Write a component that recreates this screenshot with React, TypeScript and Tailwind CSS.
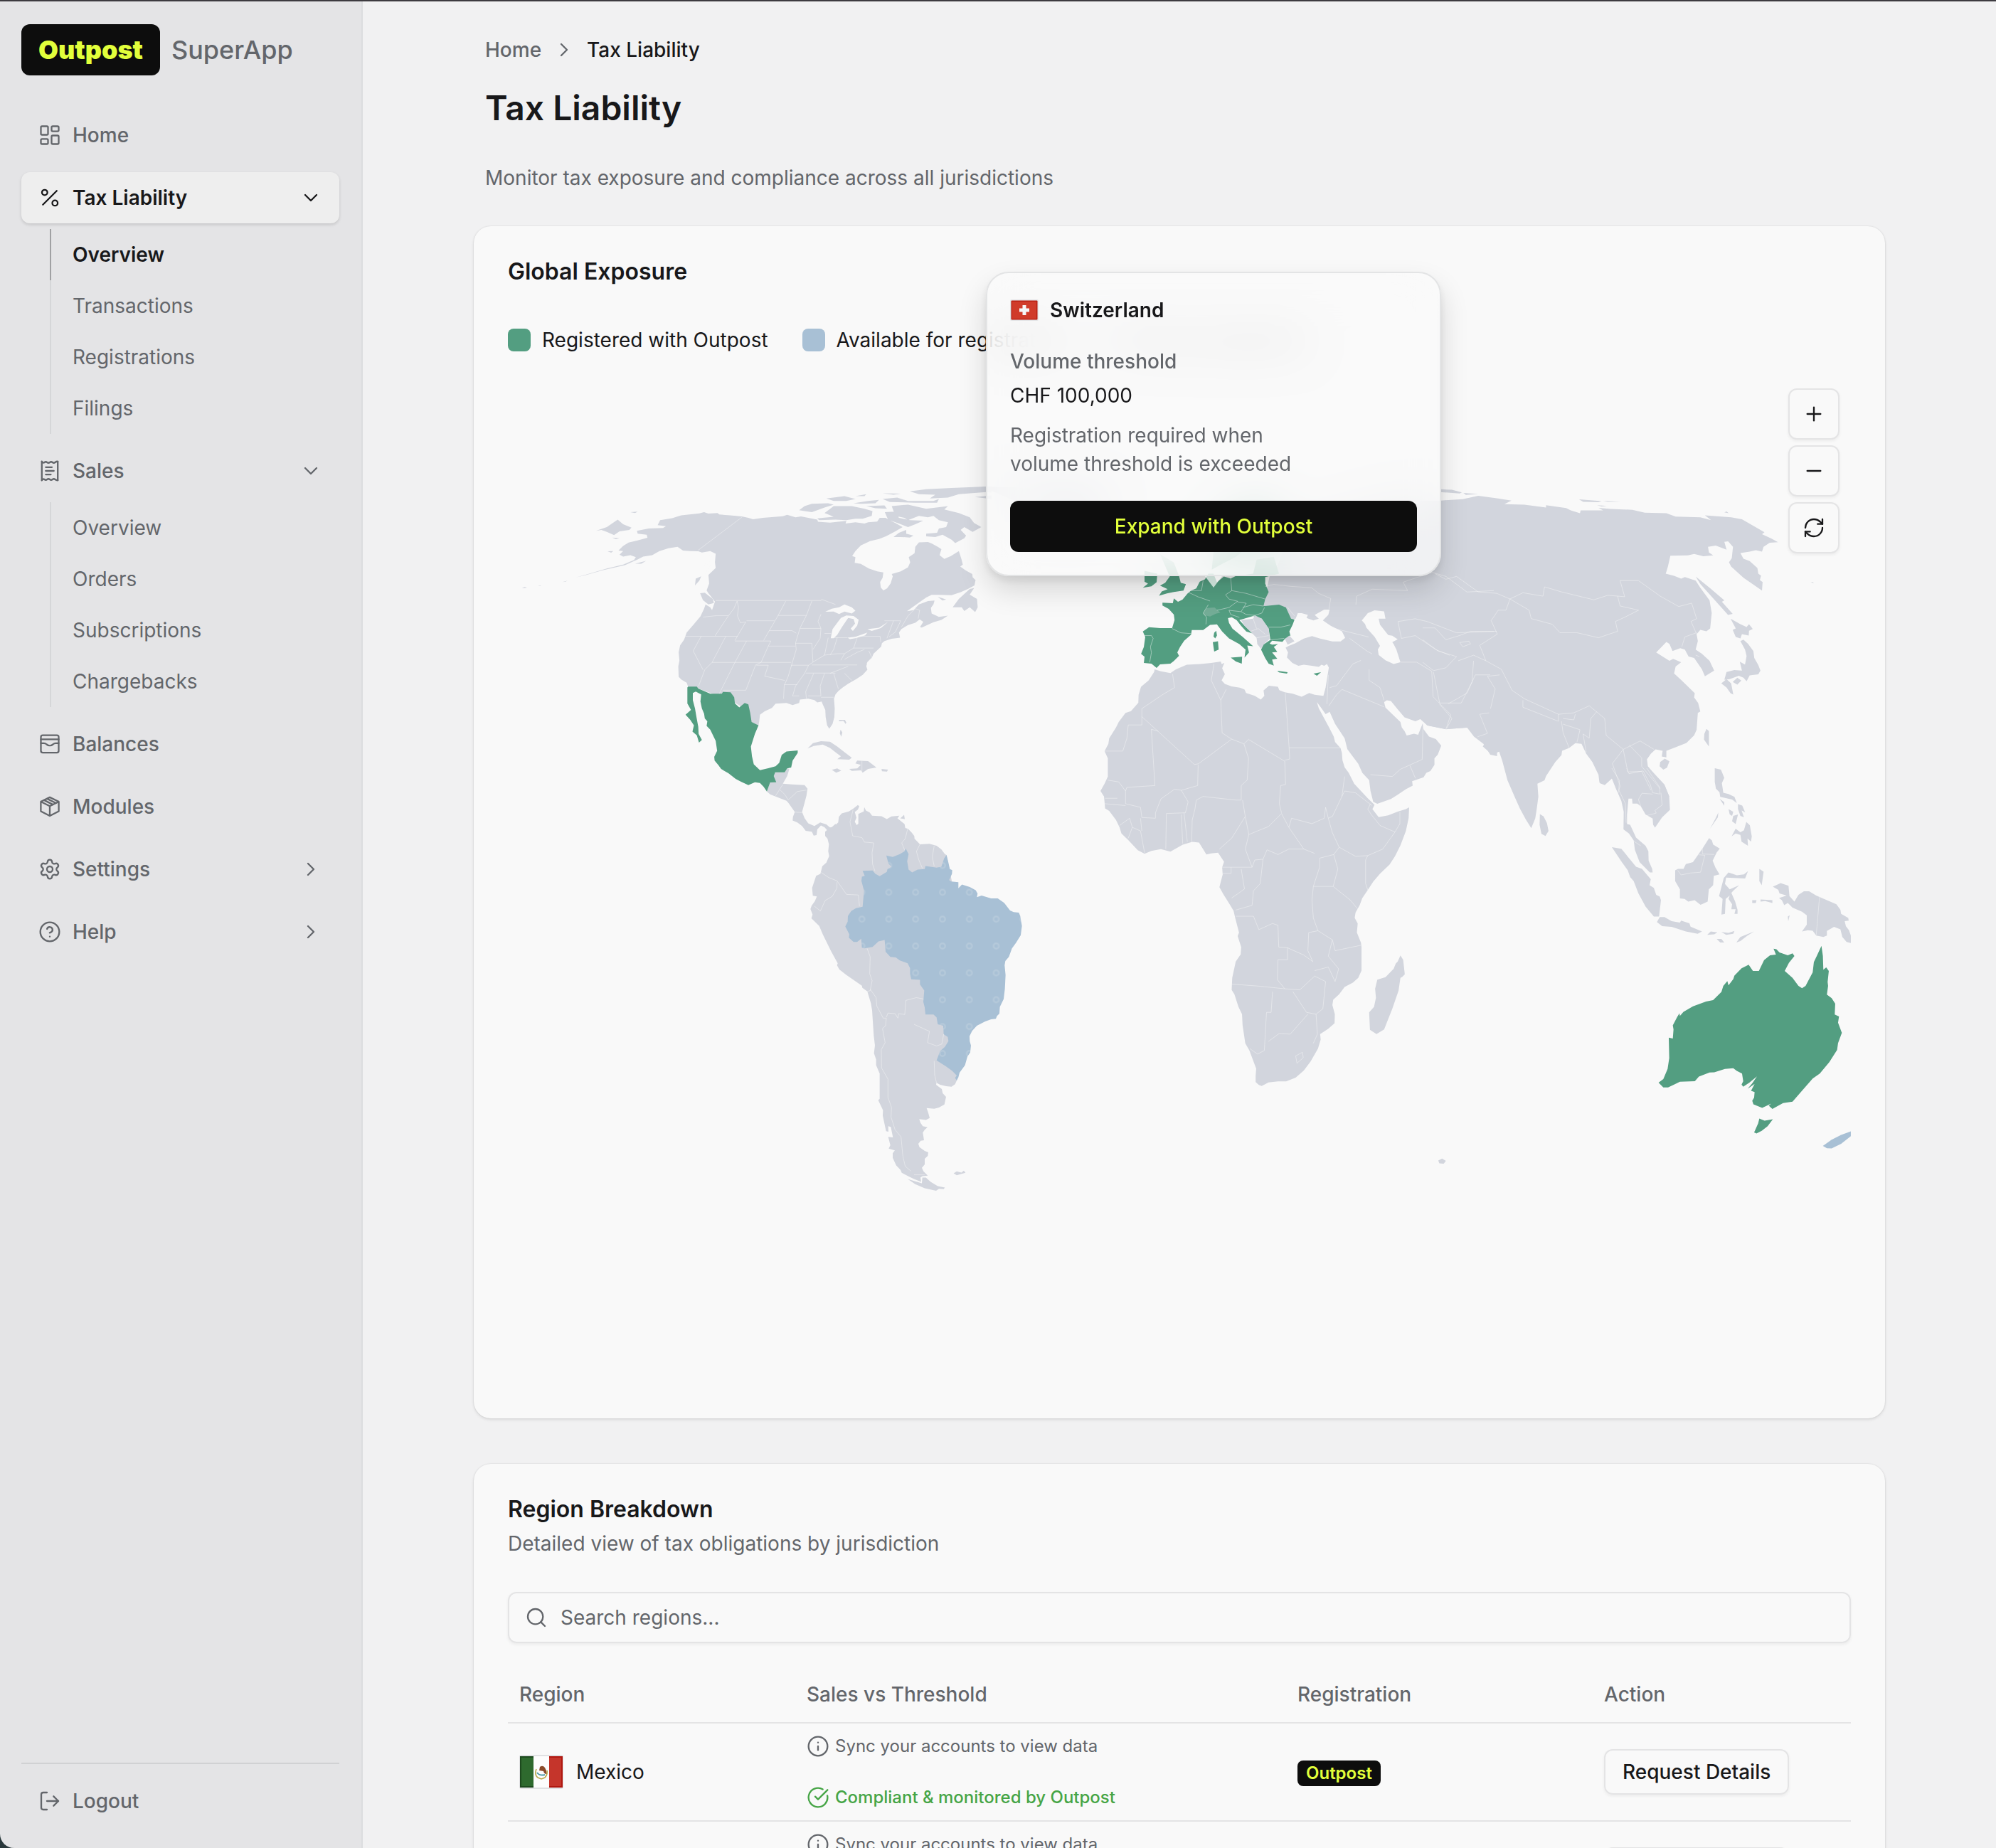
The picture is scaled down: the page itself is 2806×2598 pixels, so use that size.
import React from 'react';
import {
  ChevronDown,
  ChevronRight,
  CircleCheckBig,
  CircleQuestionMark,
  Info,
  LogOut,
  Minus,
  Plus,
  RefreshCw,
  Search,
  Settings,
} from 'lucide-react';

interface NavItem {
  label: string;
  icon: React.ReactNode;
  active?: boolean;
  chevron?: 'down' | 'right';
  children?: string[];
}

const LineIcon: React.FC<{ children: React.ReactNode }> = ({ children }) => (
  <svg
    viewBox="0 0 32 32"
    className="size-8 shrink-0"
    fill="none"
    stroke="currentColor"
    strokeWidth="2.3"
    strokeLinecap="round"
    strokeLinejoin="round"
  >
    {children}
  </svg>
);

const HomeIcon = () => (
  <LineIcon>
    <rect x="3.5" y="3.5" width="10" height="12" rx="1.6" />
    <rect x="3.5" y="21.3" width="10" height="7.2" rx="1.6" />
    <rect x="18.5" y="3.5" width="10" height="7.2" rx="1.6" />
    <rect x="18.5" y="16.5" width="10" height="12" rx="1.6" />
  </LineIcon>
);

const PercentIcon = () => (
  <LineIcon>
    <circle cx="8.8" cy="8.6" r="3.8" />
    <circle cx="23.3" cy="23.4" r="3.8" />
    <path d="M6.3 25.7 25.8 6.3" />
  </LineIcon>
);

const ReceiptIcon = () => (
  <LineIcon>
    <path d="M4.8 2.8v26.4M27.2 2.8v26.4" />
    <path d="M4.8 2.8q1.8 2.6 3.7 1.2 1.9-1.4 3.7 0 1.9 1.4 3.8 0 1.9-1.4 3.8 0 1.8 1.4 3.7 0 1.9-1.4 3.7-1.2M4.8 29.2q1.8-2.6 3.7-1.2 1.9 1.4 3.7 0 1.9-1.4 3.8 0 1.9 1.4 3.8 0 1.8-1.4 3.7 0 1.9 1.4 3.7 1.2" />
    <path d="M10.3 10.8h8.7M10.3 16h11.4M10.3 21.1h7.2" />
  </LineIcon>
);

const WalletIcon = () => (
  <LineIcon>
    <rect x="3.5" y="3.7" width="25" height="24.4" rx="2.6" />
    <path d="M3.5 9.4h25M3.5 14.8h4.3c1.4 0 2.6.6 3.8 1.7 2.6 2.2 6.2 2.2 8.8 0 1.2-1.1 2.4-1.7 3.8-1.7h4.3" />
  </LineIcon>
);

const BoxIcon = () => (
  <LineIcon>
    <path d="M16 2.9 28.6 9v13.6L16 29.1 3.4 22.6V9zM3.4 9 16 15.2 28.6 9M16 15.2v13.9" />
    <path d="m8 6.9 12.4 6.2M12.2 4.9l12.4 6.1" />
  </LineIcon>
);

const navItems: NavItem[] = [
  { label: 'Home', icon: <HomeIcon /> },
  {
    label: 'Tax Liability',
    icon: <PercentIcon />,
    active: true,
    chevron: 'down',
    children: ['Overview', 'Transactions', 'Registrations', 'Filings'],
  },
  {
    label: 'Sales',
    icon: <ReceiptIcon />,
    chevron: 'down',
    children: ['Overview', 'Orders', 'Subscriptions', 'Chargebacks'],
  },
  { label: 'Balances', icon: <WalletIcon /> },
  { label: 'Modules', icon: <BoxIcon /> },
  { label: 'Settings', icon: <Settings size={32} strokeWidth={1.75} />, chevron: 'right' },
  { label: 'Help', icon: <CircleQuestionMark size={32} strokeWidth={1.75} />, chevron: 'right' },
];

const Sidebar: React.FC = () => (
  <aside className="w-[510px] shrink-0 flex flex-col bg-[#e4e4e6] border-r-2 border-[#dcdddf] rounded-bl-[20px] pl-[30px] pr-[31px] pt-8 pb-[30px] text-[28px] leading-10 text-[#63666b]">
    <div className="flex items-center gap-4">
      <span className="h-[72px] px-6 flex items-center rounded-xl bg-[#0d0d0d] text-[#e2ff3b] text-4xl font-black">
        Outpost
      </span>
      <span className="text-4xl font-medium">SuperApp</span>
    </div>

    <nav className="mt-12 flex flex-col gap-4">
      {navItems.map((item) => (
        <div key={item.label} className="flex flex-col gap-2">
          <button
            type="button"
            className={`h-[72px] px-6 flex items-center gap-4 rounded-xl text-left ${
              item.active ? 'bg-[#eeeeee] text-[#18181a] font-semibold shadow-[0_2px_4px_rgba(0,0,0,0.14)]' : 'font-medium'
            }`}
          >
            {item.icon}
            <span className="flex-1">{item.label}</span>
            {item.chevron === 'down' && <ChevronDown size={32} strokeWidth={1.75} />}
            {item.chevron === 'right' && <ChevronRight size={32} strokeWidth={1.75} />}
          </button>
          {item.children && (
            <ul className="ml-10">
              {item.children.map((child, i) => {
                const current = item.active && i === 0;
                return (
                  <li key={child}>
                    <a
                      href="#"
                      className={`h-[72px] pl-[30px] flex items-center border-l-2 ${
                        current ? 'border-[#a0a1a3] text-[#18181a] font-semibold' : 'border-[#d5d6d8]'
                      }`}
                    >
                      {child}
                    </a>
                  </li>
                );
              })}
            </ul>
          )}
        </div>
      ))}
    </nav>

    <div className="mt-auto border-t-2 border-[#d0d1d3] pt-4">
      <button type="button" className="w-full h-[72px] px-6 flex items-center gap-4 font-medium">
        <LogOut size={32} strokeWidth={1.75} />
        Logout
      </button>
    </div>
  </aside>
);

// Each sheet keeps its own grid; the matrix places it on the map.
const AMERICAS_NORTH = 'matrix(0.5102 0 0 0.3954 700 660)';
const AMERICAS_SOUTH = 'matrix(0.3333 0 0 0.3954 1100 1100)';
const EUROPE = 'matrix(0.4847 0 0 0.3954 1340 340)';
const AFRICA = 'matrix(0.38265 0 0 0.5102 1500 760)';
const ASIA = 'matrix(0.43367 0 0 0.3954 2000 500)';
const OCEANIA = 'matrix(0.3333 0 0 0.38265 2180 1080)';

const neutralLand = [
  {
    at: AMERICAS_NORTH,
    d: `M383 218 415 210 455 208 463 202 440 198 447 180 480 173 505 163 555 156 568 152 580 157 605 155 610 160 640 163 672 167 690 172 703 177 730 172 785 166 797 161 820 170 835 167 860 173 880 178 882 186 915 189 960 183 958 192 985 188 1010 192 1020 188 1045 185 1052 172 1068 172 1085 184 1095 190 1115 205 1095 220 1070 237 1050 247 1025 255 1000 270 985 290 976 308 985 312 983 332 1000 336 1022 352 1045 362 1062 366 1060 385 1053 400 1055 420 1062 430 1072 423 1082 405 1088 380 1085 372 1110 362 1130 348 1136 330 1132 312 1148 298 1150 275 1160 259 1185 258 1195 263 1212 275 1222 283 1217 305 1230 318 1248 308 1270 290 1277 318 1281 338 1274 345 1290 360 1307 372 1308 383 1316 393 1313 412 1295 425 1275 436 1250 447 1215 446 1195 446 1180 455 1155 478 1127 504 1145 500 1160 480 1185 468 1203 466 1200 480 1193 492 1195 512 1215 524 1240 520 1222 535 1200 543 1168 562 1163 560 1172 542 1162 533 1150 545 1130 553 1112 567 1105 580 1108 598 1085 602 1065 610 1058 618 1056 630 1045 643 1035 655 1030 670 1018 685 1015 700 1018 712 1005 730 988 745 965 762 950 775 938 788 930 800 926 815 928 850 927 880 922 905 913 922 907 910 903 880 902 855 895 835 892 825 880 828 872 820 855 815 832 818 830 830 812 838 795 830 765 833 755 848 735 860 722 872 720 895 718 910 700 902 690 870 680 850 640 820 600 802 550 778 524 772 520 758 505 747 498 737 497 700 500 680 498 650 502 625 513 605 520 580 540 550 558 522 568 495 572 480 585 490 590 500 598 470 580 440 575 430 582 405 580 375 600 350 598 330 600 300 585 290 562 295 552 291 530 290 510 288 495 275 470 280 445 290 425 305 400 310 385 320 350 340 290 358 240 376 215 384 245 373 300 352 345 338 375 322 380 312 365 305 345 310 335 303 345 290 332 288 345 272 360 260 385 252 412 243 410 232 385 228Z
    M830 145 845 130 865 122 910 120 925 125 900 135 880 145 865 152 845 148Z M900 155 925 130 975 130 1010 140 1032 148 1030 165 1005 175 985 175 960 180 930 178 885 180 880 174 925 168 910 160Z
    M1135 78 1180 70 1250 66 1345 61 1360 61 1360 82 1345 80 1270 88 1240 100 1190 103 1205 90 1160 88Z M905 103 955 95 985 105 960 112 925 112Z M985 95 1015 88 1010 95Z M1060 85 1110 86 1090 90Z M1315 98 1360 92 1360 105Z
    M980 120 1020 112 1050 108 1040 120 1000 122Z M1060 105 1100 100 1130 112 1200 112 1215 105 1210 118 1150 118 1080 116Z M1015 130 1065 128 1072 140 1040 138Z
    M1085 130 1130 125 1180 140 1240 130 1230 142 1270 155 1300 170 1312 190 1332 205 1308 222 1285 205 1275 215 1290 235 1285 245 1260 262 1250 250 1225 232 1205 240 1180 238 1180 228 1210 225 1215 210 1235 205 1240 188 1215 180 1200 165 1185 170 1160 165 1130 180 1120 172 1095 165Z
    M1066 152 1092 150 1105 172 1135 180 1172 182 1150 195 1130 205 1105 192 1075 178Z M1090 240 1105 225 1125 215 1125 228 1145 235 1135 242 1110 240Z
    M1253 490 1270 460 1300 425 1312 422 1300 445 1320 460 1322 490 1315 507 1300 490 1285 503 1278 490Z M1212 453 1235 462 1225 466Z
    M557 440 570 438 592 460 595 475 580 480 565 465Z M543 412 545 388 560 380 555 395Z
    M270 218 300 205 330 178 345 195 368 207 362 215 335 220 320 233 300 222 285 215Z M365 152 385 150 378 155Z M315 242 335 245 325 248Z M302 291 318 290 312 296Z M378 335 408 325 395 335Z M66 421 74 418 80 420 74 422Z M110 415 120 412 116 415Z M178 400 192 395 186 399Z
    M764 1077 790 1077 797 1063 803 1065 797 1090 785 1117 810 1120 845 1122 853 1135 850 1160 845 1185 838 1218 845 1240 855 1258 872 1268 888 1255 905 1262 917 1275 930 1260 940 1280 912 1290 900 1272 890 1266 880 1280 878 1300 870 1302 865 1288 848 1285 838 1268 825 1255 812 1248 813 1235 818 1218 800 1185 795 1178 770 1165 750 1155 741 1145 750 1113 767 1112 760 1090Z
    M853 992 868 973 890 966 915 968 935 985 950 1000 975 1025 968 1032 935 1030 945 1020 930 1005 915 990 895 978 870 983Z M968 1065 990 1063 1000 1050 985 1045 990 1035 1020 1037 1043 1060 1020 1065 1005 1078 1000 1070 975 1072Z M920 1068 935 1063 946 1071 932 1078Z M1057 1065 1075 1067 1072 1074 1058 1073Z M940 890 956 890 960 900 958 905 952 894 940 895Z M944 925 949 935 946 950 942 938Z`,
  },
  {
    at: AMERICAS_SOUTH,
    d: `M200 160 215 158 235 142 238 122 250 110 280 103 300 92 318 80 324 85 318 97 305 105 312 125 305 140 313 152 320 147 320 128 320 112 343 103 345 88 352 100 368 107 378 118 418 120 440 130 460 121 493 118 485 128 500 138 515 148 518 162 530 165 545 178 556 190 557 200 580 220 620 218 650 225 670 238 685 255 692 258 750 500 750 950 735 1060 728 1073 713 1082 690 1080 665 1075 650 1068 648 1075 672 1090 676 1105 690 1118 683 1145 660 1156 640 1160 608 1158 615 1175 621 1193 605 1200 577 1197 582 1210 592 1222 612 1226 600 1235 592 1245 597 1272 583 1274 573 1285 578 1297 600 1310 615 1315 613 1328 600 1338 600 1358 588 1370 595 1383 613 1398 590 1400 582 1405 585 1420 555 1410 530 1400 503 1388 498 1378 480 1362 465 1335 465 1318 474 1308 448 1302 455 1290 446 1260 466 1262 457 1225 446 1222 447 1242 437 1240 423 1185 424 1165 404 1130 410 1125 410 1035 395 1005 395 985 386 963 390 935 385 900 378 810 373 785 358 743 337 730 335 723 270 685 240 665 230 650 233 643 205 600 170 540 155 510 122 483 127 470 118 450 123 438 137 422 145 405 128 403 125 375 133 355 142 332 160 325 168 298 185 285 197 262 193 245 196 220 190 200 180 190 180 175Z
    M513 115 516 130 497 128Z M590 1405 605 1405 625 1420 655 1435 685 1440 680 1446 660 1445 648 1452 600 1443 560 1428 528 1410 560 1418 588 1425Z M722 1390 735 1383 755 1387 765 1380 772 1388 750 1393 735 1397Z`,
  },
  {
    at: AFRICA,
    d: `M322 355 345 360 380 365 400 355 440 342 490 340 530 337 565 333 568 340 578 337 570 352 580 368 568 385 580 395 605 402 635 405 652 410 658 420 690 428 712 438 725 428 722 413 742 400 775 403 780 412 800 418 830 422 862 430 890 420 910 425 942 428 958 440 956 460 950 478 935 462 918 445 925 462 945 490 965 518 980 540 985 555 1005 572 1010 585 1012 605 1020 625 1035 640 1055 670 1080 690 1105 710 1130 728 1122 740 1145 762 1180 757 1215 747 1245 740 1257 735 1255 765 1245 800 1225 840 1205 870 1185 893 1150 918 1125 940 1105 963 1085 985 1075 1005 1060 1025 1057 1040 1068 1055 1065 1080 1080 1108 1082 1120 1082 1185 1070 1205 1050 1218 1020 1230 1000 1250 978 1265 975 1280 984 1305 983 1330 960 1345 930 1360 932 1375 922 1400 895 1435 870 1460 840 1480 805 1490 775 1490 740 1493 715 1503 705 1500 693 1492 693 1475 695 1455 670 1405 655 1385 645 1335 643 1305 630 1285 615 1250 605 1238 607 1205 620 1160 638 1140 640 1120 627 1090 632 1080 618 1040 612 1020 600 1005 575 975 560 955 565 940 572 920 570 900 577 885 555 860 530 862 512 865 500 850 485 832 460 830 425 838 380 857 345 850 310 855 285 863 260 853 225 825 200 807 193 790 180 770 155 745 140 738 136 705 123 690 138 670 150 650 150 600 138 580 152 560 155 545 180 515 190 500 215 475 235 470 262 447 263 425 272 403 300 385 320 362Z
    M1225 1143 1235 1155 1241 1195 1232 1202 1225 1205 1218 1240 1195 1290 1165 1347 1137 1360 1113 1348 1110 1300 1128 1285 1135 1260 1132 1235 1140 1210 1170 1203 1200 1180 1208 1165 1215 1160Z M1364 1708 1378 1703 1392 1709 1384 1717 1368 1716Z
    M838 283 870 270 900 263 930 270 975 278 1005 278 1022 268 1010 250 970 235 940 220 950 212 960 205 965 190 945 190 910 205 925 215 905 220 880 213 885 205 862 200 848 200 840 215 825 217 780 190 720 180 735 130 750 80 1580 80 1580 594 1555 590 1530 560 1495 540 1470 515 1392 520 1330 510 1310 488 1280 498 1240 487 1215 465 1190 442 1175 440 1165 445 1170 460 1195 478 1225 500 1230 515 1240 525 1248 537 1275 532 1290 535 1307 503 1310 520 1330 540 1355 547 1375 565 1362 590 1350 600 1350 618 1335 635 1320 640 1310 652 1268 663 1270 675 1245 685 1215 700 1190 712 1140 725 1125 720 1115 690 1110 660 1085 640 1070 615 1045 590 1030 575 1020 545 985 505 965 472 950 478 942 428 950 405 962 350 955 340 945 345 935 342 925 348 900 345 870 342 850 345 828 337 808 322 812 308 803 295 815 290Z`,
  },
  {
    at: ASIA,
    d: `M-10 515 60 515 130 510 180 498 240 507 288 515 265 528 330 530 400 540 400 532 465 542 480 550 510 560 512 550 585 550 570 541 610 545 680 548 720 558 790 560 820 572 900 575 935 585 915 568 1000 575 1035 582 1080 610 1108 628 1100 635 1130 650 1152 663 1125 665 1105 680 1100 697 1080 692 1060 697 1030 702 1040 722 1060 730 1085 755 1088 775 1097 782 1093 798 1102 805 1100 835 1040 790 1000 750 993 735 1002 720 1006 680 990 660 978 662 985 690 950 675 925 680 928 700 942 710 910 713 880 705 860 710 803 711 795 750 788 775 815 783 838 793 850 787 885 800 900 825 930 870 937 915 932 970 920 980 900 975 888 990 892 1015 885 1045 905 1060 930 1085 945 1120 915 1140 905 1115 880 1075 862 1070 850 1045 835 1040 810 1050 800 1025 790 1018 775 1035 757 1055 800 1085 812 1078 838 1090 820 1105 815 1130 840 1155 882 1200 880 1215 893 1235 900 1265 892 1270 888 1330 880 1350 855 1377 820 1392 790 1405 790 1428 775 1425 778 1405 755 1400 740 1415 727 1435 730 1460 760 1500 785 1530 800 1568 640 1568 630 1530 612 1500 590 1525 573 1518 570 1490 550 1445 530 1415 515 1380 495 1378 475 1395 452 1405 450 1420 430 1445 400 1495 395 1510 372 1522 375 1568 370 1610 365 1645 352 1680 335 1650 315 1610 298 1568 275 1510 258 1440 248 1408 225 1418 195 1390 200 1380 165 1350 145 1323 75 1328 15 1315 -10 1290Z
    M380 1630 392 1638 403 1662 408 1690 398 1708 385 1700 379 1668Z M885 785 930 825 978 870 970 875 1005 918 990 922 960 885 900 812Z M998 935 1030 955 1050 965 1058 955 1070 972 1058 978 1057 995 1035 990 1030 1005 1015 1000 1005 975 1015 970Z
    M1040 1010 1055 1025 1072 1050 1075 1075 1088 1100 1095 1120 1088 1133 1060 1137 1050 1158 1040 1145 1025 1138 995 1150 978 1152 985 1125 1010 1118 1035 1120 1028 1088 1045 1098 1050 1068 1045 1045 1030 1015Z M968 1165 985 1150 1000 1165 1007 1205 998 1200 985 1180Z M1005 1160 1020 1145 1033 1155 1020 1170Z
    M920 1327 928 1335 928 1390 912 1365 913 1345Z M770 1445 785 1433 800 1442 792 1465 780 1472 768 1460Z M60 475 95 477 127 486 120 490 55 485Z M132 488 180 492 140 495Z M507 511 580 517 570 521 520 520Z M585 516 640 520 600 520Z M565 532 597 534 580 536Z M978 557 985 554 992 560Z M1258 805 1265 805 1268 809Z`,
  },
  {
    at: OCEANIA,
    d: `M195 -5 207 28 207 55 228 62 258 38 275 75 298 120 308 160 307 225 330 240 350 265 355 300 375 345 418 383 430 383 428 370 413 340 412 305 400 285 360 255 335 208 322 205 322 170 328 112 343 112 345 130 365 130 380 140 400 170 430 185 432 208 440 218 470 180 503 153 500 105 480 60 410 -5Z
    M258 290 298 296 360 362 385 370 422 408 417 430 435 440 445 465 460 472 465 485 457 545 435 545 400 508 370 460 350 415 335 400 325 375 300 345Z M448 565 460 547 480 547 510 562 545 567 550 560 585 570 590 582 638 600 620 608 570 600 510 583 470 580Z
    M525 375 537 370 560 370 570 352 600 345 640 295 668 257 680 265 685 280 713 295 700 310 683 340 695 365 712 390 688 395 685 430 667 445 662 490 632 502 607 485 580 490 565 480 545 478 545 445 525 415Z
    M750 383 785 393 815 390 832 378 820 405 740 402 735 425 755 445 795 430 770 450 762 458 778 490 788 520 788 535 775 535 780 518 762 518 765 500 750 480 755 468 738 480 735 535 720 538 725 480 710 470 722 430 730 403Z
    M880 370 898 380 890 430 880 415Z M885 482 935 485 935 495 905 488 885 490Z M850 485 868 485 865 495 850 495Z M783 640 800 620 858 600 830 615 800 635Z M700 627 720 627 732 640 715 640Z M720 602 750 605 775 598 770 608 740 612Z M660 612 675 600 703 603 690 610Z
    M937 435 970 422 1003 432 1007 470 1028 490 1045 465 1068 452 1090 452 1120 468 1165 485 1205 500 1222 520 1225 535 1255 550 1257 560 1240 562 1245 580 1258 595 1266 615 1266 642 1248 638 1230 620 1222 592 1195 583 1165 598 1165 615 1150 620 1120 615 1105 597 1085 595 1060 600 1080 575 1080 540 1060 527 1020 512 1000 495 985 503 975 485 963 477 995 468 965 460 960 447Z M1000 545 1008 540 1002 562Z
    M692 0 718 5 732 35 722 55 728 90 750 95 775 105 785 128 765 115 715 105 712 88 697 75 692 50Z M712 112 732 125 732 138Z M707 163 705 180 672 222 695 185Z M750 150 770 160 765 175 755 170Z M770 175 790 170 780 205 765 195Z M790 132 808 137 820 162 805 155 815 180 800 175 790 150Z M763 250 780 222 800 235 815 228 825 197 840 210 848 250 845 270 830 258 832 285 805 270 800 245 780 240Z`,
  },
];

const registeredLand = [
  {
    at: AMERICAS_NORTH,
    d: 'M524 772 548 772 552 779 585 797 617 797 620 791 641 792 651 810 653 832 665 846 680 830 690 835 695 865 699 898 718 910 708 940 697 985 700 1020 705 1048 722 1069 745 1062 765 1055 775 1043 782 1015 795 1003 826 999 826 1008 812 1035 808 1060 797 1063 790 1077 764 1077 760 1090 767 1112 750 1113 741 1145 732 1128 722 1115 708 1112 690 1122 670 1110 655 1100 635 1080 615 1065 608 1052 597 1035 596 1022 604 1000 600 965 585 925 575 912 577 895 570 885 568 868 562 850 558 825 560 800 545 790 537 795 537 820 543 850 547 880 552 915 553 940 562 962 554 971 548 945 536 932 540 910 530 890 517 872 532 855 522 832 522 775Z',
  },
  {
    at: EUROPE,
    d: `M555 1170 592 1180 590 1210 575 1225 550 1230 565 1215 555 1208Z M600 1110 640 1140 655 1188 660 1212 675 1217 668 1240 640 1245 620 1250 597 1258 605 1243 622 1235 600 1222 615 1212 628 1190Z
    M607 1283 637 1285 640 1268 652 1280 665 1272 680 1250 690 1240 705 1232 715 1208 730 1200 740 1180 755 1180 765 1210 785 1190 805 1197 820 1188 870 1180 880 1130 930 1120 945 1180 905 1192 905 1215 915 1245 905 1270 900 1295 945 1290 965 1300 980 1340 990 1343 985 1360 975 1385 978 1400 962 1412 955 1422 925 1418 918 1428 925 1432 942 1430 930 1440 940 1458 925 1460 940 1482 925 1485 930 1507 915 1500 905 1480 893 1450 900 1432 920 1415 915 1375 895 1340 870 1330 830 1345 845 1365 868 1392 850 1385 835 1365 822 1345 808 1335 797 1338 800 1355 810 1375 840 1405 870 1438 853 1435 858 1460 845 1478 848 1450 830 1430 800 1410 780 1385 765 1360 745 1362 725 1380 692 1380 690 1397 670 1418 658 1440 650 1460 655 1472 640 1490 630 1500 600 1502 590 1515 575 1500 553 1497 555 1475 545 1465 553 1440 557 1405 550 1385 568 1370 600 1373 635 1373 642 1345 640 1325 625 1305 607 1293Z
    M757 1390 763 1383 765 1400 760 1410 755 1403Z M753 1423 768 1420 770 1450 757 1457Z M805 1478 838 1475 837 1500 820 1492Z M940 1525 970 1530 968 1535 945 1531Z M1045 1535 1067 1530 1055 1543Z
    M750 1165 755 1100 800 1020 860 950 920 950 930 1060 860 1080 820 1120 780 1145Z`,
  },
  {
    at: OCEANIA,
    d: `M940 663 952 665 965 677 1000 687 1020 680 1028 690 1005 715 987 745 1020 770 1045 800 1060 808 1075 800 1105 750 1110 712 1125 685 1142 653 1148 690 1150 740 1162 732 1173 745 1168 785 1170 800 1165 832 1185 845 1200 865 1198 905 1216 912 1212 935 1228 972 1212 1010 1208 1035 1175 1080 1135 1122 1105 1140 1065 1180 1020 1225 980 1230 935 1252 920 1240 930 1232 892 1248 855 1235 850 1222 858 1210 860 1190 845 1185 860 1160 830 1178 850 1158 870 1132 838 1155 812 1170 805 1162 812 1150 807 1122 785 1112 770 1102 735 1105 690 1117 670 1118 625 1133 608 1150 545 1152 495 1173 475 1173 455 1155 475 1142 493 1105 500 1065 498 990 515 993 518 960 515 945 533 915 543 900 545 910 560 895 600 875 655 857 685 852 720 822 728 800 745 782 750 798 770 775 775 762 805 735 835 722 853 745 878 745 900 705 925 687 950 685Z
    M880 1287 902 1295 937 1290 915 1315 890 1332 868 1342 858 1338 875 1305Z`,
  },
];

const brazil =
  'M692 258 700 285 706 308 716 312 715 325 703 347 712 352 742 355 742 376 757 363 790 372 815 383 823 395 820 408 840 402 880 412 908 412 935 428 960 455 975 461 997 463 1003 475 1010 510 1005 543 985 570 968 590 955 620 940 635 937 650 941 685 938 735 933 770 917 798 915 822 905 830 900 840 880 842 855 850 820 865 800 883 789 902 790 920 795 935 792 960 780 975 770 1005 747 1032 742 1048 735 1060 728 1050 735 1042 715 1025 690 1010 650 988 665 955 685 940 700 920 697 905 680 895 678 865 655 860 650 835 637 825 603 825 600 800 594 780 598 740 580 718 580 702 543 700 538 680 538 660 528 643 495 633 478 622 455 620 435 602 431 560 405 565 380 585 345 590 335 588 332 556 315 567 300 567 280 552 282 540 265 512 275 495 276 475 290 457 310 447 338 442 344 385 333 350 335 335 347 332 338 314 380 313 392 325 410 333 440 318 443 308 460 300 447 288 438 260 465 265 495 255 515 245 520 235 532 255 526 280 532 310 547 320 570 310 600 308 603 297 650 303 670 300 682 270Z';

const water = [
  {
    at: AMERICAS_NORTH,
    d: 'M902 506 920 495 940 490 955 480 975 490 985 502 975 512 955 505 940 514 925 505Z M917 600 922 568 935 545 945 528 960 519 980 521 994 534 990 555 978 574 972 566 984 548 980 532 965 528 948 560 935 588 925 600Z M963 598 985 595 1018 580 1012 590 985 600 970 603Z M1018 568 1050 563 1075 542 1055 564 1030 574Z',
  },
  {
    at: AFRICA,
    d: 'M1083 220 1105 200 1130 192 1165 195 1170 215 1145 215 1150 232 1180 260 1195 262 1215 272 1195 280 1200 285 1210 300 1225 335 1200 340 1170 330 1145 315 1142 300 1150 290 1130 265 1100 240 1095 230Z',
  },
];

const borders = [
  {
    at: AMERICAS_NORTH,
    d: `M552 287 672 170M600 466H890L892 462 930 480M659 468 650 495 635 520 598 592M565 525 600 520 635 520M515 593H660M659 468 663 490 660 520 668 545 683 542 653 608M685 538H762M793 468 772 519 732 608M653 610H752M772 519H850M865 468 850 519 832 565 820 617M748 573H810L822 582M832 565H890M745 628H820M752 610 745 628 725 686M820 617 822 640 800 735 790 765M820 618H865M590 686H808M628 593 590 686 570 712 553 770M560 593 538 645 565 712M685 610 653 686 610 797M725 686 710 695 683 785H620M712 696H745L735 735 790 750M808 696H856M789 765H825M789 765 787 815M865 618 868 685 856 696 845 725 820 770 812 805H830M865 695H990M848 724H930M870 725 848 790 850 815M900 725 888 770 890 805H855M925 725 938 780M890 810H925M915 725 935 715 965 700M955 725 975 750M910 598 900 660M900 583H918M935 598 925 640 915 660M868 685 900 660 935 655 955 655 945 678M925 598H963M990 598 980 635 955 655M980 635H1035M990 593H1053L1055 615M955 675 990 650 1010 640M1065 538H1110M1090 538 1072 600M1110 538 1095 578 1078 595M1112 560 1130 520 1150 495 1162 500 1158 530M890 515 882 540 890 565 888 600 868 640M785 1120 765 1160M778 1140 790 1155 800 1175 825 1145 850 1140M818 1218 838 1220M565 300 578 320 568 345 590 330 572 370 598 350M575 300 590 310 580 340 592 355M1022 645 1030 668 1016 690M1003 1037V1075`,
  },
  {
    at: AMERICAS_SOUTH,
    d: `M298 97 285 140 296 190 335 196 345 212 385 215 378 250 380 290 390 315M528 165 518 200 503 215 515 240M580 220 565 245 575 275 590 305M640 225 632 265 640 298M163 320 195 338 230 350 270 398 320 400 325 440M230 355 230 375 210 405 180 420 160 457 135 440M357 590 370 620 368 680 378 705 370 740 358 743M370 735 395 765 398 795 425 838 438 838 435 865 422 875 433 925 417 950 418 1015 445 1055 445 1120 460 1155 458 1190 475 1235 500 1260 508 1330 518 1365 542 1382M438 835 445 820 475 822 487 838 490 822 516 825 520 775 565 765 595 770M555 860 620 885 612 925 650 937 672 930 680 895M640 990 642 1040 650 1070M555 1395H600`,
  },
  {
    at: EUROPE,
    d: `M555 1400 575 1400 580 1410 572 1440 575 1460 570 1495M635 1375 660 1390 690 1393M680 1245 710 1262 745 1277M688 1240 720 1240 725 1205M740 1290 725 1320 735 1335 733 1360M805 1195 808 1240 790 1255 800 1270 825 1278 800 1300 765 1310M808 1240 850 1250 905 1270M825 1280 850 1285 840 1305 835 1315 800 1310 805 1325 830 1335M840 1300 870 1290 900 1295M870 1330 895 1320 903 1300M835 1315 850 1325 875 1328M915 1370 950 1370 978 1362M920 1415 960 1410M905 1225 930 1218 980 1225 1040 1230 1060 1250 1095 1268 1090 1305M970 1300 990 1330M1168 1290 1170 1260 1215 1235 1318 1240 1305 1210 1390 1175 1430 1190 1490 1245 1568 1240M1090 1370 1140 1385 1205 1405M1150 1410 1200 1455 1215 1465M1290 1350 1340 1340 1375 1350 1460 1390 1568 1385M1290 1350 1300 1410 1340 1400 1400 1450 1440 1470M862 1385 885 1375 905 1395M880 1408 915 1400M870 1340 880 1375`,
  },
  {
    at: AFRICA,
    d: `M388 368 395 405 350 425 275 463 275 508 225 508 220 545 205 580 138 580M275 485 468 617 483 615 605 547 570 530 565 440 530 385 540 340M565 440 585 410M605 547 650 560 667 548 800 608 803 672 785 675 780 725 788 750M802 420 816 570 818 602 800 605M816 571H1005M650 560 667 600 662 660 640 675 640 715 620 715 500 705 475 715 470 740 460 770 458 830M335 525 310 520 323 675 220 680 215 690 190 665 150 660M482 618 480 675 420 688 395 685 345 712 325 750 325 765 275 763 270 735 215 725 215 690M420 688 445 720 435 750 365 752 363 850M420 755 425 835M430 750 442 830M138 725 215 730M140 710 185 710M193 785 230 765 240 790 225 820M240 790 270 800 285 860M270 765 275 800M645 715 655 760 605 820 560 850M655 760 668 810 700 800 740 788 788 752 815 790 870 850 910 862M668 810 655 850 680 900 570 900M572 917H603V900M680 900 690 880 720 878 735 852 775 865 815 850 870 850M720 878 710 945 685 965 680 1005 620 1018M640 905 652 960 605 985M620 1035H685L705 1072 755 1055 775 1060 778 1120 810 1122M775 1155 773 1210 800 1235 710 1228 605 1222M775 1155H810V1122L870 1142 903 1160 885 1130 888 1080 922 1075M815 790 825 765 900 780 945 765 950 735 960 765 975 760 1010 705 1020 650M960 765 975 805 1000 845 1060 870 1105 868 1160 850 1205 803 1150 785 1118 755 1105 740 1115 725M1205 803 1223 780 1223 748M1105 868 1097 880 1097 945 1105 963M1000 845 980 865 995 905 978 953 1040 990 1068 1015M978 953H905L900 990 905 1040 922 1075 975 1100 985 1130 1080 1115M980 865 928 875 928 900 905 953M1010 705 1020 690 1060 695 1120 730M975 1100 960 1145 998 1180 985 1215 960 1175 910 1185M800 1235 855 1238 910 1200 950 1215 940 1290 915 1305 880 1300 830 1243M755 1243 750 1300 733 1300 725 1405 700 1415 672 1400M740 1380 780 1358 820 1360 885 1305M915 1305 920 1360 905 1385M840 1420 865 1410 868 1425 845 1440ZM962 455 990 425 1010 410 1165 458M960 370 955 450M965 405 990 400 1050 340 1080 330M1110 355 1110 385 1150 405 1165 440M1115 645 1195 650 1225 630 1305 603 1308 505M1260 620 1280 655M1225 335 1285 335 1340 360 1345 430 1410 480 1392 520M1400 450 1470 420 1500 370 1555 370`,
  },
  {
    at: ASIA,
    d: `M40 775 75 795 110 785 180 840 240 845 283 865 325 843 390 855 395 822 450 840 555 868 600 852 655 857 640 800 700 800 770 855 830 892 872 880 888 935 870 945 888 990M283 865 345 905 352 935 420 955 445 985 500 985 570 1003 632 980 625 945 655 930 700 905 640 890 632 855M283 865 270 905 245 905 222 942 242 990 185 1030 205 1085 255 1115 290 1190 330 1220 440 1275 490 1270 540 1245 590 1290 595 1350 650 1400 705 1370 750 1400M240 980 155 980 120 995 75 1010 40 968 0 968M0 1010 50 1050 110 1070 75 1110 35 1120 0 1090M115 1085 165 1065 205 1085M35 1125 55 1235 125 1235 160 1160 165 1085M120 1020 150 1015 155 1025 130 1035ZM55 1240 95 1290 78 1325M250 1135 210 1140 235 1185 220 1255M215 1270 185 1275 210 1343 178 1355M325 1225 325 1250 440 1300 440 1275M450 1300 455 1340 475 1395M455 1310 510 1330 500 1375M495 1275 490 1295 455 1290M565 1265 545 1290 540 1360 520 1345 530 1410M650 1400 615 1450 640 1530 630 1568M650 1400 665 1480 710 1478 740 1545M670 1385 710 1430 710 1460 770 1540M885 1065 897 1070M840 1035 850 1000 888 985`,
  },
  {
    at: OCEANIA,
    d: 'M258 0 290 45 287 80 315 130 318 200M320 0 330 20 390 10 420 60 430 90 460 95 460 70 405 0M430 95 385 92 370 115 380 140M465 90 470 135 440 155 445 165 400 175M345 265 380 285M535 375 550 392 590 385 632 382 650 320 625 318M640 295 640 315 690 317M1134 472 1120 613',
  },
];

const WorldMap: React.FC = () => (
  <svg viewBox="714 530 1888 1416" className="block w-full h-auto" role="img" aria-label="World map of tax exposure">
    <defs>
      <pattern id="available-dots" x="1192.8" y="1273.3" width="37.76" height="37.76" patternUnits="userSpaceOnUse">
        <rect width="37.76" height="37.76" fill="#a8c0d5" />
        <circle cx="18.88" cy="18.88" r="3.7" fill="none" stroke="#b5c9da" strokeWidth="2.4" />
      </pattern>
      <clipPath id="brazil-clip">
        <path d={brazil} transform={AMERICAS_SOUTH} />
      </clipPath>
    </defs>

    <g fill="#d2d5dd">
      {neutralLand.map((sheet) => (
        <path key={sheet.at} transform={sheet.at} d={sheet.d} />
      ))}
      <path d="M1380 684 1560 688 1550 730 1490 750 1440 710Z" />
      <path d="M2030 704 1950 712 1870 735 1815 745 1790 811 2030 811Z" />
    </g>
    <g fill="#f9f9f9">
      {water.map((sheet) => (
        <path key={sheet.at} transform={sheet.at} d={sheet.d} />
      ))}
    </g>
    <g fill="#539e81">
      {registeredLand.map((sheet) => (
        <path key={sheet.at} transform={sheet.at} d={sheet.d} />
      ))}
    </g>
    <g transform={EUROPE}>
      <path
        fill="#d2d5dd"
        d="M835 1345 870 1340 875 1328 895 1340 915 1375 918 1412 900 1432 893 1447 882 1430 880 1408 862 1385 845 1365Z M962 1412 975 1400 990 1420 970 1432Z"
      />
      <path fill="#74ad97" d="M725 1320 735 1302 758 1300 775 1318 762 1322 745 1332 728 1328Z" />
    </g>
    <g clipPath="url(#brazil-clip)">
      <rect x="1180" y="1180" width="270" height="350" fill="url(#available-dots)" />
    </g>
    <path
      transform={OCEANIA}
      fill="#a8c0d5"
      d="M1148 1388 1185 1365 1225 1347 1266 1334 1266 1352 1225 1380 1185 1397 1165 1396Z"
    />
    <g fill="none" stroke="#f9f9f9" strokeOpacity="0.45" strokeWidth="1">
      {borders.map((sheet) => (
        <path key={sheet.at} transform={sheet.at} d={sheet.d} vectorEffect="non-scaling-stroke" />
      ))}
    </g>
  </svg>
);

const SwissFlag = () => (
  <svg viewBox="0 0 40 30" className="w-10 h-[30px]" aria-hidden="true">
    <rect width="40" height="30" rx="2" fill="#e3e4e6" />
    <rect x="1.5" y="1.5" width="37" height="27" rx="1" fill="#b81f12" />
    <rect x="3" y="3" width="34" height="24" fill="#d03b2a" />
    <path d="M20 8v14M13 15h14" stroke="#f5f6f8" strokeWidth="5" />
  </svg>
);

const MexicoFlag = () => (
  <svg viewBox="0 0 62 48" className="w-[62px] h-12 shrink-0" aria-hidden="true">
    <rect width="62" height="48" rx="3" fill="#e0e1e3" />
    <rect x="1" y="2" width="60" height="44" fill="#fdfdfd" />
    <path d="M1 2h19v44H1z" fill="#1d4a1e" />
    <path d="M3 4h17v40H3z" fill="#2e6a2e" />
    <path d="M42 2h19v44H42z" fill="#b0170f" />
    <path d="M42 4h17v40H42z" fill="#c5352b" />
    <path d="M24 20q-3 8 2 12l5 2 5-2q4-4 3-10" fill="none" stroke="#b9a94a" strokeWidth="1.6" />
    <path d="M29 17q4-3 7 1 3 5 2 9-3 0-4-4l-6-1z" fill="#8a4b2a" />
    <path d="M25 25q4 5 11 3" fill="none" stroke="#4d9aa5" strokeWidth="2" />
  </svg>
);

const AustraliaFlag = () => (
  <svg viewBox="0 0 62 48" className="w-[62px] h-12 shrink-0" aria-hidden="true">
    <rect width="62" height="48" rx="3" fill="#1f2f7a" />
    <path d="M0 12h30M15 0v24" stroke="#fdfdfd" strokeWidth="6" />
    <path d="M0 12h30M15 0v24" stroke="#c5352b" strokeWidth="3" />
  </svg>
);

const CountryPopover: React.FC = () => (
  <div className="absolute left-[672px] -top-[148px] w-[640px]">
    <div className="rounded-[32px] border-2 border-[#e3e4e5] bg-[#f9f9f9]/75 backdrop-blur-[32px] shadow-[0_20px_40px_rgba(0,0,0,0.14),0_6px_12px_rgba(0,0,0,0.08)] p-8 flex flex-col">
      <div className="h-10 flex items-center gap-4">
        <SwissFlag />
        <span className="font-semibold">Switzerland</span>
      </div>
      <span className="mt-8 text-[#63666b] font-medium">Volume threshold</span>
      <span className="mt-2">CHF 100,000</span>
      <p className="mt-4 text-[#63666b]">
        Registration required when
        <br />
        volume threshold is exceeded
      </p>
      <button type="button" className="mt-8 h-[72px] rounded-xl bg-[#0d0d0d] text-[#e2ff3b] font-medium">
        Expand with Outpost
      </button>
    </div>
    <svg viewBox="0 0 24 16" className="absolute left-[308px] top-full w-6 h-4" aria-hidden="true">
      <path d="M0 0h24L12 16z" fill="#f9f9f9" fillOpacity="0.7" />
    </svg>
  </div>
);

const legend = [
  { label: 'Registered with Outpost', swatch: 'bg-[#539e81]' },
  { label: 'Available for registration', swatch: 'bg-[#a8c0d5]' },
  { label: 'Not yet supported', swatch: 'bg-[#d2d5dd]' },
];

const mapControls = [
  { label: 'Zoom in', icon: Plus },
  { label: 'Zoom out', icon: Minus },
  { label: 'Reset map', icon: RefreshCw },
];

const regions = [
  { name: 'Mexico', flag: <MexicoFlag /> },
  { name: 'Australia', flag: <AustraliaFlag /> },
];

const cardClass = 'rounded-3xl bg-[#f9f9f9] p-12 shadow-[0_0_2px_rgba(0,0,0,0.12),0_2px_4px_rgba(0,0,0,0.1)]';

const GlobalExposure: React.FC = () => (
  <section className={`mt-12 ${cardClass}`}>
    <h2 className="text-[32px] leading-8 font-semibold">Global Exposure</h2>
    <ul className="mt-16 flex gap-12">
      {legend.map((item) => (
        <li key={item.label} className="flex items-center gap-4 leading-8">
          <span className={`size-8 rounded-lg ${item.swatch}`}></span>
          {item.label}
        </li>
      ))}
    </ul>
    <div className="relative mt-9">
      <WorldMap />
      <div className="absolute top-4 right-4 flex flex-col gap-2">
        {mapControls.map(({ label, icon: Icon }) => (
          <button
            key={label}
            type="button"
            aria-label={label}
            className="size-[72px] flex items-center justify-center rounded-xl border-2 border-[#e4e4e5] bg-[#f9f9f9] shadow-[0_2px_4px_rgba(0,0,0,0.06)]"
          >
            <Icon size={32} strokeWidth={1.75} />
          </button>
        ))}
      </div>
      <CountryPopover />
    </div>
  </section>
);

const RegionBreakdown: React.FC = () => (
  <section className={`mt-16 ${cardClass}`}>
    <h2 className="text-[32px] leading-8 font-semibold">Region Breakdown</h2>
    <p className="mt-3 text-[#63666b]">Detailed view of tax obligations by jurisdiction</p>
    <label className="mt-12 h-[72px] px-[22px] flex items-center gap-[18px] rounded-xl border-2 border-[#e4e4e5] shadow-[0_2px_4px_rgba(0,0,0,0.06)] text-[#63666b]">
      <Search size={32} strokeWidth={1.75} />
      <input
        type="text"
        aria-label="Search regions"
        placeholder="Search regions..."
        className="flex-1 bg-transparent outline-none placeholder:text-[#63666b]"
      />
    </label>
    <table className="mt-8 w-full table-fixed text-left">
      <colgroup>
        <col className="w-[404px]" />
        <col className="w-[690px]" />
        <col className="w-[431px]" />
        <col />
      </colgroup>
      <thead>
        <tr className="h-20 border-b-2 border-[#e4e4e5] text-[#63666b]">
          <th className="px-4 font-medium">Region</th>
          <th className="px-4 font-medium">Sales vs Threshold</th>
          <th className="px-4 font-medium">Registration</th>
          <th className="px-4 font-medium">Action</th>
        </tr>
      </thead>
      <tbody>
        {regions.map((region) => (
          <tr key={region.name} className="border-b-2 border-[#e4e4e5]">
            <td className="p-4">
              <div className="flex items-center gap-[18px]">
                {region.flag}
                {region.name}
              </div>
            </td>
            <td className="p-4 text-2xl">
              <div className="flex items-center gap-2 leading-8 text-[#63666b]">
                <Info size={32} strokeWidth={1.75} />
                Sync your accounts to view data
              </div>
              <div className="mt-10 flex items-center gap-2 leading-8 font-medium text-[#46a546]">
                <CircleCheckBig size={32} strokeWidth={1.75} />
                Compliant &amp; monitored by Outpost
              </div>
            </td>
            <td className="p-4">
              <span className="inline-flex items-center h-9 px-3 rounded-lg bg-[#0d0d0d] text-[#e2ff3b] text-2xl font-semibold">
                Outpost
              </span>
            </td>
            <td className="p-4">
              <button
                type="button"
                className="h-16 px-6 rounded-xl border-2 border-[#e4e4e5] font-medium shadow-[0_2px_4px_rgba(0,0,0,0.06)]"
              >
                Request Details
              </button>
            </td>
          </tr>
        ))}
      </tbody>
    </table>
  </section>
);

const App: React.FC = () => (
  <div className="h-screen flex overflow-hidden bg-[#29383b] border-t-2 border-[#3d3b40] font-['Inter',sans-serif]">
    <Sidebar />
    <main className="flex-1 min-w-0 overflow-hidden bg-[#f1f1f2] text-[28px] leading-10 text-[#18181a]">
      <div className="max-w-[2048px] mx-auto px-8 pt-12 pb-16">
        <header className="px-4">
          <nav aria-label="Breadcrumb" className="flex items-center gap-4 font-medium">
            <a href="#" className="text-[#63666b]">
              Home
            </a>
            <ChevronRight size={32} strokeWidth={1.75} className="text-[#63666b]" />
            <span>Tax Liability</span>
          </nav>
          <h1 className="mt-[30px] text-5xl leading-[64px] font-semibold">Tax Liability</h1>
          <p className="mt-[46px] text-[#63666b]">Monitor tax exposure and compliance across all jurisdictions</p>
        </header>
        <GlobalExposure />
        <RegionBreakdown />
      </div>
    </main>
  </div>
);

export default App;
